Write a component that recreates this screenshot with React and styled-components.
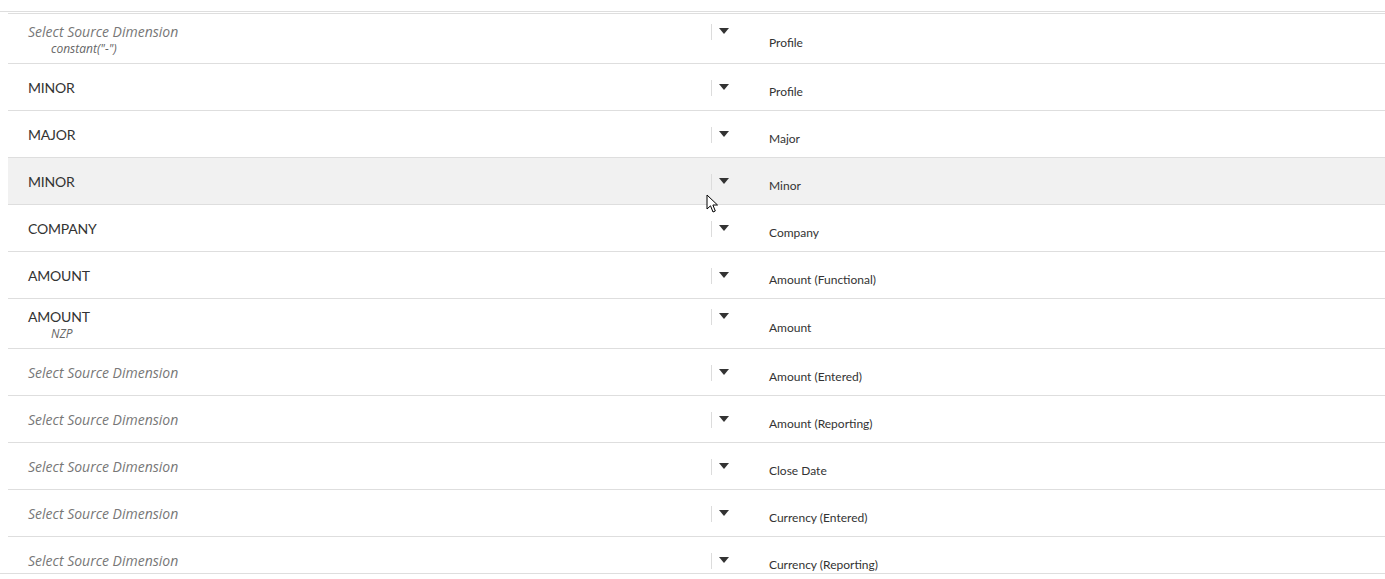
import React from 'react'
import styled, { createGlobalStyle } from 'styled-components'

const GlobalStyle = createGlobalStyle`
    html, body {
        margin: 0;
        padding: 0;
        background: #fff;
        overflow: hidden;
    }
    body {
        font-family: Lato, "Open Sans", sans-serif;
        color: #333;
    }
`

const rows = [
    { source: null, sub: 'constant("-")', target: 'Profile' },
    { source: 'MINOR', target: 'Profile' },
    { source: 'MAJOR', target: 'Major' },
    { source: 'MINOR', target: 'Minor', hover: true },
    { source: 'COMPANY', target: 'Company' },
    { source: 'AMOUNT', target: 'Amount (Functional)' },
    { source: 'AMOUNT', sub: 'NZP', target: 'Amount' },
    { source: null, target: 'Amount (Entered)' },
    { source: null, target: 'Amount (Reporting)' },
    { source: null, target: 'Close Date' },
    { source: null, target: 'Currency (Entered)' },
    { source: null, target: 'Currency (Reporting)' },
]

const Cursor = () => (
    <CursorWrap>
        <svg width="14" height="20" viewBox="0 0 14 20">
            <path d="M1 1 L1 15 L4.5 11.8 L7 18 L9.3 17 L6.9 11 L11.5 11 Z" fill="#fff" stroke="#000" strokeWidth="1" strokeLinejoin="round" />
        </svg>
    </CursorWrap>
)

const App = () => {
    return (
        <>
            <GlobalStyle />
            <Page>
                <Scroller>
                    <List>
                        {rows.map((r, i) => (
                            <Row key={i} hover={r.hover}>
                                <Source>
                                    <Values>
                                        {r.source
                                            ? <Value>{r.source}</Value>
                                            : <Placeholder>Select Source Dimension</Placeholder>}
                                        {r.sub && <Sub>{r.sub}</Sub>}
                                    </Values>
                                    <Toggle>
                                        <Divider />
                                        <Arrow />
                                    </Toggle>
                                </Source>
                                <Target>{r.target}</Target>
                            </Row>
                        ))}
                    </List>
                </Scroller>
                <Cursor />
            </Page>
        </>
    )
}

export default App

const Page = styled.div`
    position: relative;
    padding-top: 11px;
    height: 579px;
    box-sizing: border-box;
`
const Scroller = styled.div`
    height: 563px;
    box-sizing: border-box;
    border-top: 1px solid #dedede;
    border-bottom: 1px solid #dedede;
    overflow: hidden;
    padding-left: 8px;
`
const List = styled.div`
    margin-top: 1px;
    border-top: 1px solid #dedede;
`
const Row = styled.div`
    display: flex;
    align-items: center;
    min-height: 47px;
    box-sizing: border-box;
    padding: 8px 0 7px;
    border-bottom: 1px solid #dedede;
    background: ${(p) => (p.hover ? '#f1f1f1' : 'transparent')};
`
const Source = styled.div`
    display: flex;
    align-items: flex-start;
    width: 723px;
    flex-shrink: 0;
`
const Values = styled.div`
    flex: 1;
    display: flex;
    flex-direction: column;
    padding-left: 20px;
`
const Value = styled.div`
    font-size: 14px;
    line-height: 19px;
    color: #333;
    letter-spacing: -0.2px;
`
const Placeholder = styled(Value)`
    font-family: "Open Sans", Lato, sans-serif;
    font-size: 14px;
    letter-spacing: 0;
    font-style: italic;
    color: #777;
`
const Sub = styled.div`
    font-family: "Open Sans", Lato, sans-serif;
    font-size: 12px;
    line-height: 15px;
    font-style: italic;
    color: #666;
    padding-left: 23px;
`
const Toggle = styled.div`
    display: flex;
    align-items: center;
    height: 19px;
    gap: 7px;
    margin-right: 2px;
`
const Divider = styled.div`
    width: 1px;
    height: 16px;
    background: #dcdcdc;
`
const Arrow = styled.div`
    width: 0;
    height: 0;
    border-left: 5px solid transparent;
    border-right: 5px solid transparent;
    border-top: 6px solid #333;
    margin-top: -1px;
`
const Target = styled.div`
    margin-left: 38px;
    padding-top: 8px;
    font-size: 12px;
    line-height: 16px;
    color: #333;
`
const CursorWrap = styled.div`
    position: absolute;
    left: 706px;
    top: 194px;
    pointer-events: none;
`
